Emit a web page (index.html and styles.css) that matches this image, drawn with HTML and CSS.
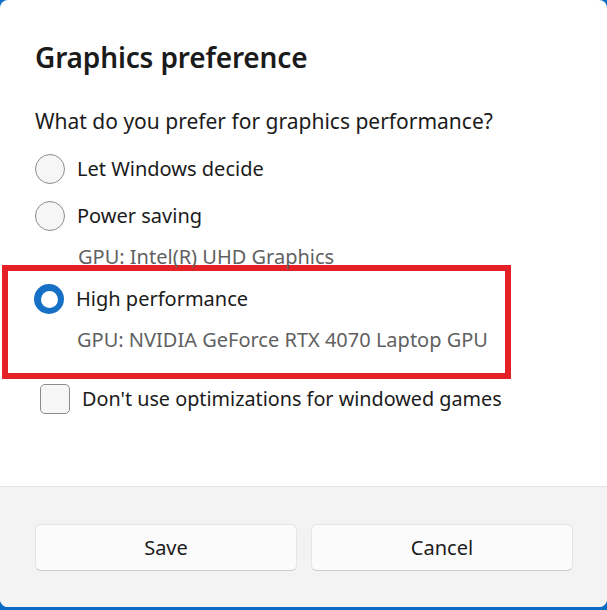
FILE: index.html
```html
<!DOCTYPE html>
<html lang="en">
<head>
<meta charset="utf-8">
<title>Graphics preference</title>
<link rel="stylesheet" href="styles.css">
</head>
<body>
<div class="dialog">
  <div class="content">
    <h1 class="title">Graphics preference</h1>
    <p class="question">What do you prefer for graphics performance?</p>
    <div class="option">
      <span class="radio"></span>
      <span class="label">Let Windows decide</span>
    </div>
    <div class="option option-gap">
      <span class="radio"></span>
      <span class="label">Power saving</span>
    </div>
    <p class="sub sub-intel">GPU: Intel(R) UHD Graphics</p>
    <div class="highlight">
      <div class="option">
        <span class="radio radio-checked"></span>
        <span class="label">High performance</span>
      </div>
      <p class="sub sub-nvidia">GPU: NVIDIA GeForce RTX 4070 Laptop GPU</p>
    </div>
    <div class="check-row">
      <span class="checkbox"></span>
      <span class="label label-check">Don't use optimizations for windowed games</span>
    </div>
  </div>
  <div class="footer">
    <button class="btn" type="button">Save</button>
    <button class="btn" type="button">Cancel</button>
  </div>
</div>
</body>
</html>
```
FILE: styles.css
```css
* { box-sizing: border-box; }
html, body {
  margin: 0;
  padding: 0;
  width: 607px;
  height: 610px;
  background: #0b6cc6;
  overflow: hidden;
}
body {
  font-family: "Noto Sans", "Open Sans", sans-serif;
  color: #1b1b1b;
}
.dialog {
  width: 607px;
  height: 607px;
  background: #ffffff;
  border-radius: 8px;
  overflow: hidden;
  display: flex;
  flex-direction: column;
}
.content {
  flex: 1;
  padding: 39px 0 0 35px;
}
.title {
  margin: 0;
  font-size: 28px;
  line-height: 36px;
  font-weight: 600;
  letter-spacing: -0.15px;
  color: #1b1b1b;
}
.question {
  margin: 32px 0 0;
  font-size: 21px;
  line-height: 28px;
}
.option {
  display: flex;
  align-items: center;
  gap: 12px;
  height: 30px;
  margin-top: 19px;
}
.option-gap { margin-top: 17px; }
.label {
  font-size: 20px;
  line-height: 28px;
  white-space: nowrap;
}
.label-check { font-size: 19.8px; }
.radio {
  width: 30px;
  height: 30px;
  flex: none;
  border-radius: 50%;
  border: 1.5px solid #8b8b8b;
  background: #f6f6f6;
}
.radio-checked {
  border: none;
  background: #1570c6;
  display: flex;
  align-items: center;
  justify-content: center;
}
.radio-checked::after {
  content: "";
  width: 17px;
  height: 17px;
  border-radius: 50%;
  background: #ffffff;
}
.sub {
  margin: 12px 0 0 43px;
  font-size: 20px;
  line-height: 28px;
  color: #616161;
}
.highlight {
  width: 509px;
  margin: -6px 0 0 -33px;
  border: 6px solid #e41f26;
  padding: 13px 0 19px 26px;
}
.highlight .option { margin-top: 0; }
.sub-nvidia { margin-top: 12px; }
.check-row {
  display: flex;
  align-items: center;
  gap: 12px;
  margin: 5px 0 0 5px;
  height: 30px;
}
.checkbox {
  width: 30px;
  height: 30px;
  flex: none;
  border-radius: 5px;
  border: 1.5px solid #8b8b8b;
  background: #f6f6f6;
}
.footer {
  height: 121px;
  border-top: 1px solid #e5e5e5;
  background: #f3f3f3;
  padding: 37px 34px 0 35px;
  display: grid;
  grid-template-columns: 1fr 1fr;
  column-gap: 14px;
  align-content: start;
}
.btn {
  height: 47px;
  border: 1px solid #e5e5e5;
  border-bottom-color: #cccccc;
  border-radius: 6px;
  background: #fbfbfb;
  font-family: "Noto Sans", "Open Sans", sans-serif;
  font-size: 20px;
  color: #1b1b1b;
  padding: 0;
}
```
